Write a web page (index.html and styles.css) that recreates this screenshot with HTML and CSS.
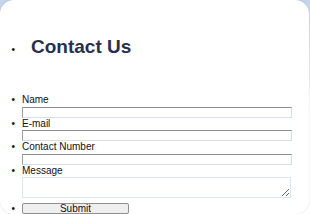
FILE: index.html
```html
<!DOCTYPE html>
<html lang="en">
<head>
  <meta charset="UTF-8" />
  <meta name="viewport" content="width=device-width, initial-scale=1.0" />
  <title>Contact Us</title>
  <link rel="stylesheet" href="styles.css">
</head>
<body>
  <div class="card">
    <form class="contact">
      <ul class="fields">
        <li class="title"><h2>Contact Us</h2></li>
        <li><label for="name">Name</label><input type="text" id="name"></li>
        <li><label for="email">E-mail</label><input type="text" id="email"></li>
        <li><label for="phone">Contact Number</label><input type="text" id="phone"></li>
        <li><label for="message">Message</label><textarea id="message"></textarea></li>
        <li class="send"><button class="button" type="submit">Submit</button></li>
      </ul>
    </form>
  </div>
</body>
</html>
```

FILE: styles.css
```css
html, body {
  margin: 0;
  height: 100%;
}
body {
  background: linear-gradient(#c2d4ec, #fff 50%);
  font-family: 'Liberation Sans', Arial, sans-serif;
  overflow: hidden;
}
.card {
  display: flow-root;
  background: #fff;
  height: 214px;
  margin-right: 1px;
  border-radius: 14px;
  box-shadow: 0 0 2px rgba(0,0,0,0.15);
}
.fields {
  margin: 0;
  padding: 0 0 0 22px;
  font-size: 10px;
  color: #111;
}
.fields li::marker {
  content: "\2022\2002\2009";
  font-size: 10px;
  color: #111;
}
.title h2 {
  margin: 36px 0;
  padding-left: 9px;
  font-size: 19px;
  line-height: 22px;
  color: #283050;
}
.fields label {
  display: block;
  line-height: 12.5px;
}
.fields input {
  display: block;
  box-sizing: border-box;
  width: 270px;
  height: 11px;
  padding: 0;
  border: 1px solid;
  border-color: #8d8d8d #d5deea #d5deea #a0a0a0;
}
.fields textarea {
  display: block;
  box-sizing: border-box;
  width: 269px;
  height: 21px;
  padding: 0;
  border: 1px solid #dfe5ee;
}
.send {
  margin-top: 4.7px;
  line-height: 11px;
}
.button {
  box-sizing: border-box;
  width: 107px;
  height: 11px;
  padding: 0;
  vertical-align: top;
  font-family: inherit;
  font-size: 10px;
  line-height: 9px;
  color: #111;
  background: #efefef;
  border: 1px solid #8f8f8f;
  border-radius: 2px;
}
```
